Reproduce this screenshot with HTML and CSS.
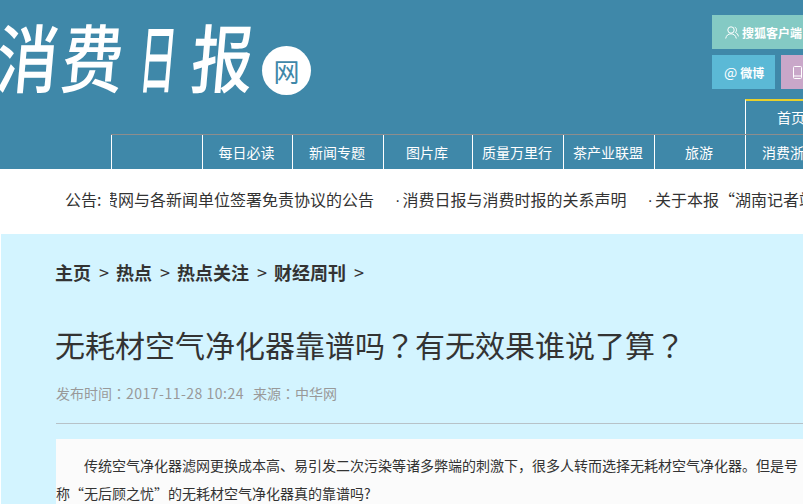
FILE: index.html
```html
<!DOCTYPE html>
<html lang="zh-CN">
<head>
  <meta charset="UTF-8">
  <title>无耗材空气净化器靠谱吗？有无效果谁说了算？</title>
  <link rel="stylesheet" href="styles.css">
</head>
<body>
  <div class="page">
    <!-- header -->
    <div class="header">
      <div class="head-top">
        <div class="logo">
          <span class="logo-text">消费<span class="logo-narrow">日</span>报</span>
          <span class="logo-badge">网</span>
        </div>
        <div class="top-links">
          <a href="#" class="btn btn-client">
            <svg class="btn-icon" viewBox="0 0 14 13" width="14" height="13"><circle cx="6" cy="4" r="3.2"/><path d="M0.7 12.5c.5-3 2.500-4.700 5.300-4.700s4.800 1.700 5.300 4.700"/><path d="M9.800 1.200c1.800.6 2.500 3.600.6 5.200 1.500.7 2.700 2.200 3 4"/></svg>
            搜狐客户端
          </a>
          <div class="btn-row">
            <a href="#" class="btn btn-weibo"><span class="at">@</span>微博</a>
            <a href="#" class="btn btn-mobile">
              <svg class="btn-icon" viewBox="0 0 9 13" width="9" height="13"><rect x="0.500" y="0.500" width="8" height="12" rx="1"/><path d="M0.500 10h8"/></svg>
            </a>
          </div>
        </div>
      </div>
      <div class="tab-row">
        <a href="#" class="tab-home">首页</a>
      </div>
      <div class="nav">
        <a href="#"></a>
        <a href="#">每日必读</a>
        <a href="#">新闻专题</a>
        <a href="#">图片库</a>
        <a href="#">质量万里行</a>
        <a href="#">茶产业联盟</a>
        <a href="#">旅游</a>
        <a href="#">消费浙江</a>
      </div>
    </div>

    <!-- notice -->
    <div class="notice">
      <span class="notice-label">公告:</span>
      <div class="notice-clip">
        <div class="notice-list">
          <span>消费网与各新闻单位签署免责协议的公告</span>
          <span><i>·</i>消费日报与消费时报的关系声明</span>
          <span><i>·</i>关于本报“湖南记者站”的声明</span>
        </div>
      </div>
    </div>

    <!-- main -->
    <div class="main">
      <div class="crumbs">
        <a href="#">主页</a><b>&gt;</b>
        <a href="#">热点</a><b>&gt;</b>
        <a href="#">热点关注</a><b>&gt;</b>
        <a href="#">财经周刊</a><b>&gt;</b>
      </div>
      <h1>无耗材空气净化器靠谱吗<span class="mark" lang="zh-TW">？</span>有无效果谁说了算<span class="mark" lang="zh-TW">？</span></h1>
      <div class="meta">
        <span>发布时间<span class="mark" lang="zh-TW">：</span><span class="date">2017-11-28 10:24</span></span>
        <span>来源<span class="mark" lang="zh-TW">：</span>中华网</span>
      </div>
      <div class="article">
        <p>传统空气净化器滤网更换成本高、易引发二次污染等诸多弊端的刺激下，很多人转而选择无耗材空气净化器。但是号称“无后顾之忧”的无耗材空气净化器真的靠谱吗?</p>
      </div>
    </div>
  </div>
</body>
</html>
```

FILE: styles.css
```css
html, body {
  margin: 0;
  height: 504px;
  overflow: hidden;
}

body {
  font-family: "Noto Sans CJK SC", "Liberation Sans", sans-serif;
  background-color: white;
  color: #333;
}

a {
  color: inherit;
  text-decoration: none;
}

.page {
  width: 1100px;
}

/* header */
.header {
  background-color: #3f88a9;
  color: white;
  height: 169px;
}

.head-top {
  display: flex;
  height: 99px;
  box-sizing: border-box;
  padding-top: 15px;
}

.logo {
  width: 712px;
  height: 80px;
  display: flex;
  align-items: center;
  overflow: hidden;
}

.logo-text {
  font-size: 62px;
  line-height: 80px;
  letter-spacing: 3px;
  margin-left: -3px;
  white-space: nowrap;
  font-weight: 500;
  transform: scaleY(1.2) skewX(-6deg);
  transform-origin: left center;
}

/* 日 is tall and thin in the logo */
.logo-narrow {
  display: inline-block;
  transform: scaleX(0.6);
}

.logo-badge {
  width: 49px;
  height: 49px;
  margin: 30px 0 0 5px;
  border-radius: 50%;
  background-color: white;
  color: #3f88a9;
  font-size: 26px;
  line-height: 49px;
  text-align: center;
}

.top-links {
  display: flex;
  flex-direction: column;
  gap: 6px;
}

.btn {
  height: 34px;
  display: flex;
  align-items: center;
  gap: 3px;
  font-size: 12px;
  font-weight: bold;
  color: white;
  box-sizing: border-box;
  padding-left: 12px;
}

.btn-icon {
  fill: none;
  stroke: white;
  stroke-width: 1;
}

.btn-client {
  width: 103px;
  padding-left: 13px;
  background-color: #84cac4;
}

.btn-row {
  display: flex;
  gap: 6px;
}

.btn-weibo {
  width: 63px;
  background-color: #5bb9d6;
}

.at {
  font-size: 14px;
  font-weight: normal;
}

.btn-mobile {
  width: 63px;
  background-color: #c9a7c9;
}

.tab-row {
  height: 35px;
  margin-left: 745px;
}

.tab-home {
  display: block;
  width: 91px;
  height: 35px;
  box-sizing: border-box;
  border-left: 1px solid white;
  border-top: 2px solid #e8d02c;
  font-size: 14px;
  line-height: 33px;
  text-align: center;
}

.nav {
  display: grid;
  grid-template-columns: 91px 90px 91px 89px 91px 91px 91px 91px;
  height: 35px;
  box-sizing: border-box;
  margin-left: 111px;
  border-top: 1px solid #8d8d8d;
}

.nav a {
  box-sizing: border-box;
  padding-right: 2px;
  border-left: 1px solid white;
  font-size: 14px;
  line-height: 34px;
  text-align: center;
}

/* notice */
.notice {
  display: flex;
  height: 65px;
  box-sizing: border-box;
  padding: 0 0 5px 65px;
  align-items: center;
  font-size: 16px;
  color: #333;
}

.notice-label {
  width: 45px;
}

.notice-clip {
  width: 900px;
  overflow: hidden;
}

.notice-list {
  display: flex;
  gap: 21px;
  margin-left: -24px;
  white-space: nowrap;
}

.notice-list i {
  font-family: "Liberation Sans", sans-serif;
  font-style: normal;
  display: inline-block;
  width: 7.5px;
}

/* main */
.main {
  margin-left: 1px;
  padding: 26px 0 0 55px;
  height: 270px;
  box-sizing: border-box;
  background-color: #d3f4ff;
}

.crumbs {
  display: flex;
  gap: 8px;
  margin-left: -1px;
  font-size: 18px;
  font-weight: bold;
  line-height: 24px;
}

.crumbs b {
  width: 9px;
  font-weight: normal;
}

h1 {
  margin: 40px 0 19px -1px;
  font-size: 30px;
  font-weight: normal;
  line-height: 40px;
  color: #333;
}

/* fullwidth punctuation sits centred in its cell here */
.mark {
  font-family: "Noto Sans CJK TC", sans-serif;
}

.meta {
  display: flex;
  gap: 9px;
  padding-bottom: 20px;
  border-bottom: 1px solid #b7c2c8;
  font-size: 14px;
  line-height: 20px;
  color: #999;
}

.date {
  letter-spacing: 0.5px;
}

.article {
  margin-top: 15px;
  padding-top: 12px;
  height: 100px;
  background-color: #fbfbfb;
}

.article p {
  margin: 0;
  width: 745px;
  font-size: 14px;
  line-height: 28px;
  text-indent: 2em;
  color: #333;
}
```
